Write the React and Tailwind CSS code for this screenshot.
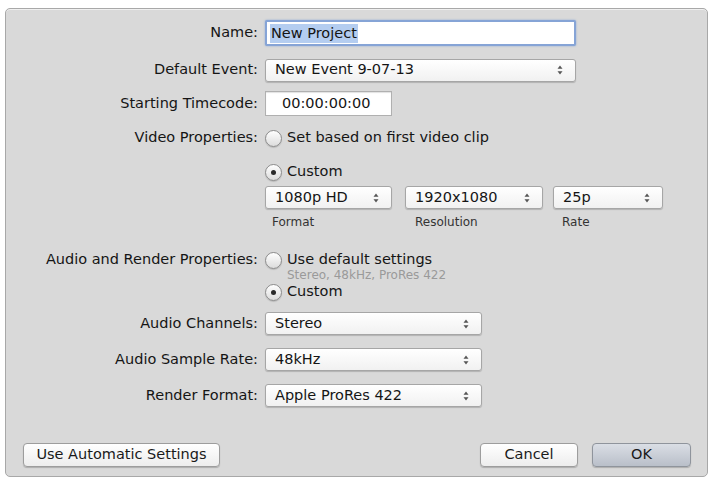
import React from "react";

const font = { fontFamily: '"DejaVu Sans", "Liberation Sans", sans-serif' };

function Arrows() {
  return (
    <svg width="6" height="10" viewBox="0 0 6 10" className="shrink-0">
      <path d="M3 0.5 L5.5 3.8 L0.5 3.8 Z" fill="#555" />
      <path d="M3 9.5 L5.5 6.2 L0.5 6.2 Z" fill="#555" />
    </svg>
  );
}

function Select({ value, w }) {
  return (
    <div
      className={`${w} h-[23px] flex items-center justify-between pl-[9px] pr-[12px] rounded-[3px] border border-[#a6a6a6] bg-gradient-to-b from-[#ffffff] to-[#f1f1f1] shadow-[0_1px_1px_rgba(0,0,0,0.18)] text-[14.5px] text-[#151515]`}
    >
      <span>{value}</span>
      <Arrows />
    </div>
  );
}

function Radio({ checked }) {
  return (
    <div className="w-[17px] h-[17px] rounded-full border border-[#8c8c8c] bg-gradient-to-b from-[#ffffff] to-[#dcdcdc] shadow-[0_1px_1px_rgba(0,0,0,0.15)] flex items-center justify-center shrink-0">
      {checked && <div className="w-[5px] h-[5px] rounded-full bg-[#2a2a2a]" />}
    </div>
  );
}

function Label({ children }) {
  return (
    <div className="w-[252px] shrink-0 text-right text-[14.5px] text-[#151515] whitespace-nowrap">
      {children}
    </div>
  );
}

function Row({ label, className = "", children }) {
  return (
    <div className={`flex items-center gap-[7px] ${className}`}>
      <Label>{label}</Label>
      <div className="flex items-center">{children}</div>
    </div>
  );
}

function Button({ children, w, primary }) {
  return (
    <div
      className={`${w} h-[24px] flex items-center justify-center rounded-[4px] border text-[14.5px] text-[#1a1a1a] shadow-[0_1px_1px_rgba(0,0,0,0.2)] ${
        primary
          ? "border-[#8f949c] bg-gradient-to-b from-[#dadee5] to-[#b9bfc9]"
          : "border-[#9d9d9d] bg-gradient-to-b from-[#ffffff] to-[#ededed]"
      }`}
    >
      {children}
    </div>
  );
}

export default function App() {
  return (
    <div className="w-[712px] h-[479px] bg-white pt-[8px] pl-[5px]" style={font}>
      <div className="w-[703px] h-[469px] rounded-[5px] border border-[#a8a8a8] bg-[#d9d9d9] shadow-[inset_0_1px_0_rgba(255,255,255,0.6)] flex flex-col">
        <Row label="Name:" className="mt-[11px] h-[26px]">
          <div className="w-[311px] h-[26px] border-2 border-[#86a4d6] rounded-[2px] bg-white flex items-center pl-[3px] shadow-[0_0_2px_rgba(80,130,210,0.6)]">
            <span className="bg-[#b4cdf0] text-[14.5px] text-[#151515] leading-[19px] px-[1px]">
              New Project
            </span>
          </div>
        </Row>
        <Row label="Default Event:" className="mt-[12px] h-[24px]">
          <Select value="New Event 9-07-13" w="w-[311px]" />
        </Row>
        <Row label="Starting Timecode:" className="mt-[9px] h-[25px]">
          <div className="w-[127px] h-[25px] border border-[#b0b0b0] bg-white flex items-center pl-[16px] text-[14.5px] text-[#151515] shadow-[inset_0_1px_1px_rgba(0,0,0,0.12)]">
            00:00:00:00
          </div>
        </Row>
        <Row label="Video Properties:" className="mt-[10px] h-[24px]">
          <div className="flex items-center gap-[5px] text-[14.5px] text-[#151515]">
            <Radio />
            <span>Set based on first video clip</span>
          </div>
        </Row>
        <Row label="" className="mt-[10px] h-[24px]">
          <div className="flex items-center gap-[5px] text-[14.5px] text-[#151515]">
            <Radio checked />
            <span>Custom</span>
          </div>
        </Row>
        <Row label="" className="mt-[2px] h-[23px]">
          <div className="flex items-center">
            <Select value="1080p HD" w="w-[127px]" />
            <div className="w-[13px]" />
            <Select value="1920x1080" w="w-[138px]" />
            <div className="w-[10px]" />
            <Select value="25p" w="w-[110px]" />
          </div>
        </Row>
        <Row label="" className="mt-[5px] h-[16px]">
          <div className="flex items-center text-[12px] text-[#333]">
            <span className="w-[149px] pl-[7px]">Format</span>
            <span className="w-[148px] pl-[1px]">Resolution</span>
            <span className="pl-[0px]">Rate</span>
          </div>
        </Row>
        <Row label="Audio and Render Properties:" className="mt-[21px] h-[18px]">
          <div className="flex items-center gap-[5px] text-[14.5px] text-[#151515]">
            <Radio />
            <span>Use default settings</span>
          </div>
        </Row>
        <Row label="" className="h-[13px]">
          <span className="pl-[22px] text-[12px] text-[#9a9a9a] leading-[13px]">
            Stereo, 48kHz, ProRes 422
          </span>
        </Row>
        <Row label="" className="h-[20px]">
          <div className="flex items-center gap-[5px] text-[14.5px] text-[#151515]">
            <Radio checked />
            <span>Custom</span>
          </div>
        </Row>
        <Row label="Audio Channels:" className="mt-[10px] h-[23px]">
          <Select value="Stereo" w="w-[217px]" />
        </Row>
        <Row label="Audio Sample Rate:" className="mt-[13px] h-[23px]">
          <Select value="48kHz" w="w-[217px]" />
        </Row>
        <Row label="Render Format:" className="mt-[13px] h-[23px]">
          <Select value="Apple ProRes 422" w="w-[217px]" />
        </Row>
        <div className="mt-[36px] flex items-center pl-[17px] pr-[16px]">
          <Button w="w-[197px]">Use Automatic Settings</Button>
          <div className="flex-1" />
          <Button w="w-[98px]">Cancel</Button>
          <div className="w-[14px]" />
          <Button w="w-[99px]" primary>OK</Button>
        </div>
      </div>
    </div>
  );
}
